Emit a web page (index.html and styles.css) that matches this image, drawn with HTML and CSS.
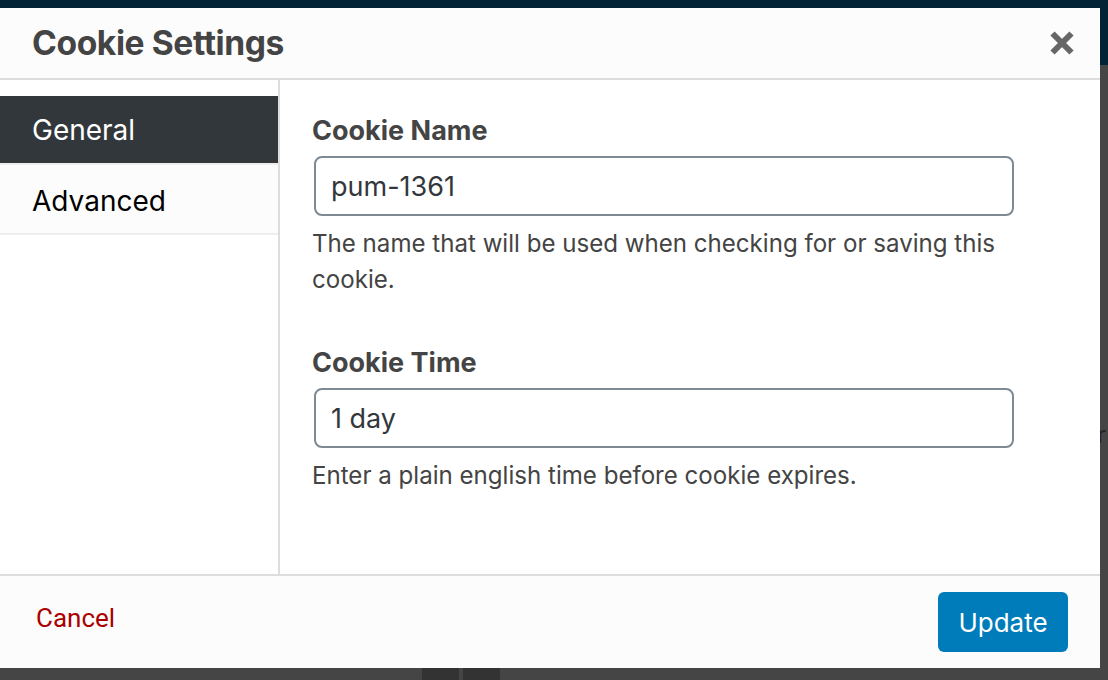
FILE: index.html
```html
<!DOCTYPE html>
<html lang="en">
<head>
<meta charset="utf-8">
<title>Cookie Settings</title>
<link rel="stylesheet" href="styles.css">
</head>
<body>
<div class="backdrop">
  <div class="bd-top"></div>
  <div class="bd-rest">
    <span class="bd-glyph">r</span>
    <span class="bd-block bd-block-a"></span>
    <span class="bd-block bd-block-b"></span>
  </div>
</div>
<div class="modal">
  <header class="modal-header">
    <h1 class="modal-title">Cookie Settings</h1>
    <button class="close-btn" aria-label="Close">
      <svg width="24" height="24" viewBox="0 0 24 24"><path d="M2.5 2.5 L21.5 21.5 M21.5 2.5 L2.5 21.5" stroke="#666" stroke-width="6" fill="none"/></svg>
    </button>
  </header>
  <div class="modal-body">
    <nav class="tabs">
      <div class="tab tab-active">General</div>
      <div class="tab tab-lower">Advanced</div>
    </nav>
    <section class="panel">
      <div class="field">
        <label class="field-label">Cookie Name</label>
        <div class="input">pum-1361</div>
        <p class="desc">The name that will be used when checking for or saving this cookie.</p>
      </div>
      <div class="field field-second">
        <label class="field-label">Cookie Time</label>
        <div class="input">1 day</div>
        <p class="desc">Enter a plain english time before cookie expires.</p>
      </div>
    </section>
  </div>
  <footer class="modal-footer">
    <span class="cancel">Cancel</span>
    <button class="update">Update</button>
  </footer>
</div>
</body>
</html>
```
FILE: styles.css
```css
* { box-sizing: border-box; }
html, body { margin: 0; padding: 0; }
body {
  width: 1108px;
  height: 680px;
  overflow: hidden;
  position: relative;
  background: #454545;
  font-family: "Inter", "Noto Sans", sans-serif;
  color: #444;
}
.backdrop {
  display: flex;
  flex-direction: column;
  height: 680px;
}
.bd-top { height: 65px; background: #022336; }
.bd-rest { flex: 1; background: #454545; position: relative; }
.bd-glyph {
  position: absolute;
  left: 1097px;
  top: 355px;
  font-size: 24px;
  color: #222;
  font-family: "Inter", sans-serif;
}
.bd-block { position: absolute; top: 603px; height: 12px; background: #333; }
.bd-block-a { left: 422px; width: 37px; }
.bd-block-b { left: 463px; width: 37px; }

.modal {
  position: absolute;
  left: 0;
  top: 8px;
  width: 1100px;
  height: 660px;
  background: #fff;
  display: flex;
  flex-direction: column;
}
.modal-header {
  height: 72px;
  flex: none;
  background: #fcfcfc;
  border-bottom: 2px solid #ddd;
  display: flex;
  align-items: center;
  justify-content: space-between;
  padding: 0 26px 0 32px;
}
.modal-title {
  margin: 0;
  font-size: 33.6px;
  font-weight: 700;
  letter-spacing: -0.4px;
  color: #444;
  line-height: 40px;
}
.close-btn {
  border: 0;
  background: none;
  padding: 0;
  width: 24px;
  height: 24px;
  display: flex;
}
.modal-body {
  flex: 1;
  display: flex;
  min-height: 0;
}
.tabs {
  width: 280px;
  flex: none;
  border-right: 2px solid #ddd;
  padding-top: 16px;
  background: #fff;
}
.tab {
  height: 70px;
  display: flex;
  align-items: center;
  padding-left: 32px;
  font-size: 28px;
  color: #000;
  background: #fcfcfc;
  border-bottom: 2px solid #eee;
}
.tab-lower { padding-top: 3px; }
.tab-active {
  height: 69px;
  background: #32373c;
  color: #fff;
  border-bottom-color: #eee;
}
.panel {
  flex: 1;
  padding: 33px 32px 0 32px;
}
.field-label {
  display: block;
  font-size: 27px;
  font-weight: 700;
  line-height: 36px;
  color: #444;
}
.input {
  margin: 7px 0 0 2px;
  width: 700px;
  height: 60px;
  border: 2px solid #7e8993;
  border-radius: 8px;
  background: #fff;
  display: flex;
  align-items: center;
  padding-left: 15px;
  font-size: 27px;
  color: #32373c;
}
.desc {
  margin: 10px 0 0 0;
  font-size: 24.1px;
  line-height: 36px;
  color: #444;
  width: 720px;
}
.field-second { margin-top: 47px; }
.modal-footer {
  height: 94px;
  flex: none;
  background: #fcfcfc;
  border-top: 2px solid #ddd;
  display: flex;
  align-items: center;
  justify-content: space-between;
  padding: 0 32px 0 36px;
}
.cancel {
  font-family: "Roboto", "Liberation Sans", sans-serif;
  font-size: 26px;
  color: #a00;
  margin-top: -9px;
}
.update {
  width: 130px;
  height: 60px;
  border: 0;
  border-radius: 6px;
  background: #007cba;
  color: #fff;
  font-family: "Inter", sans-serif;
  font-size: 26px;
  padding: 0;
}
```
